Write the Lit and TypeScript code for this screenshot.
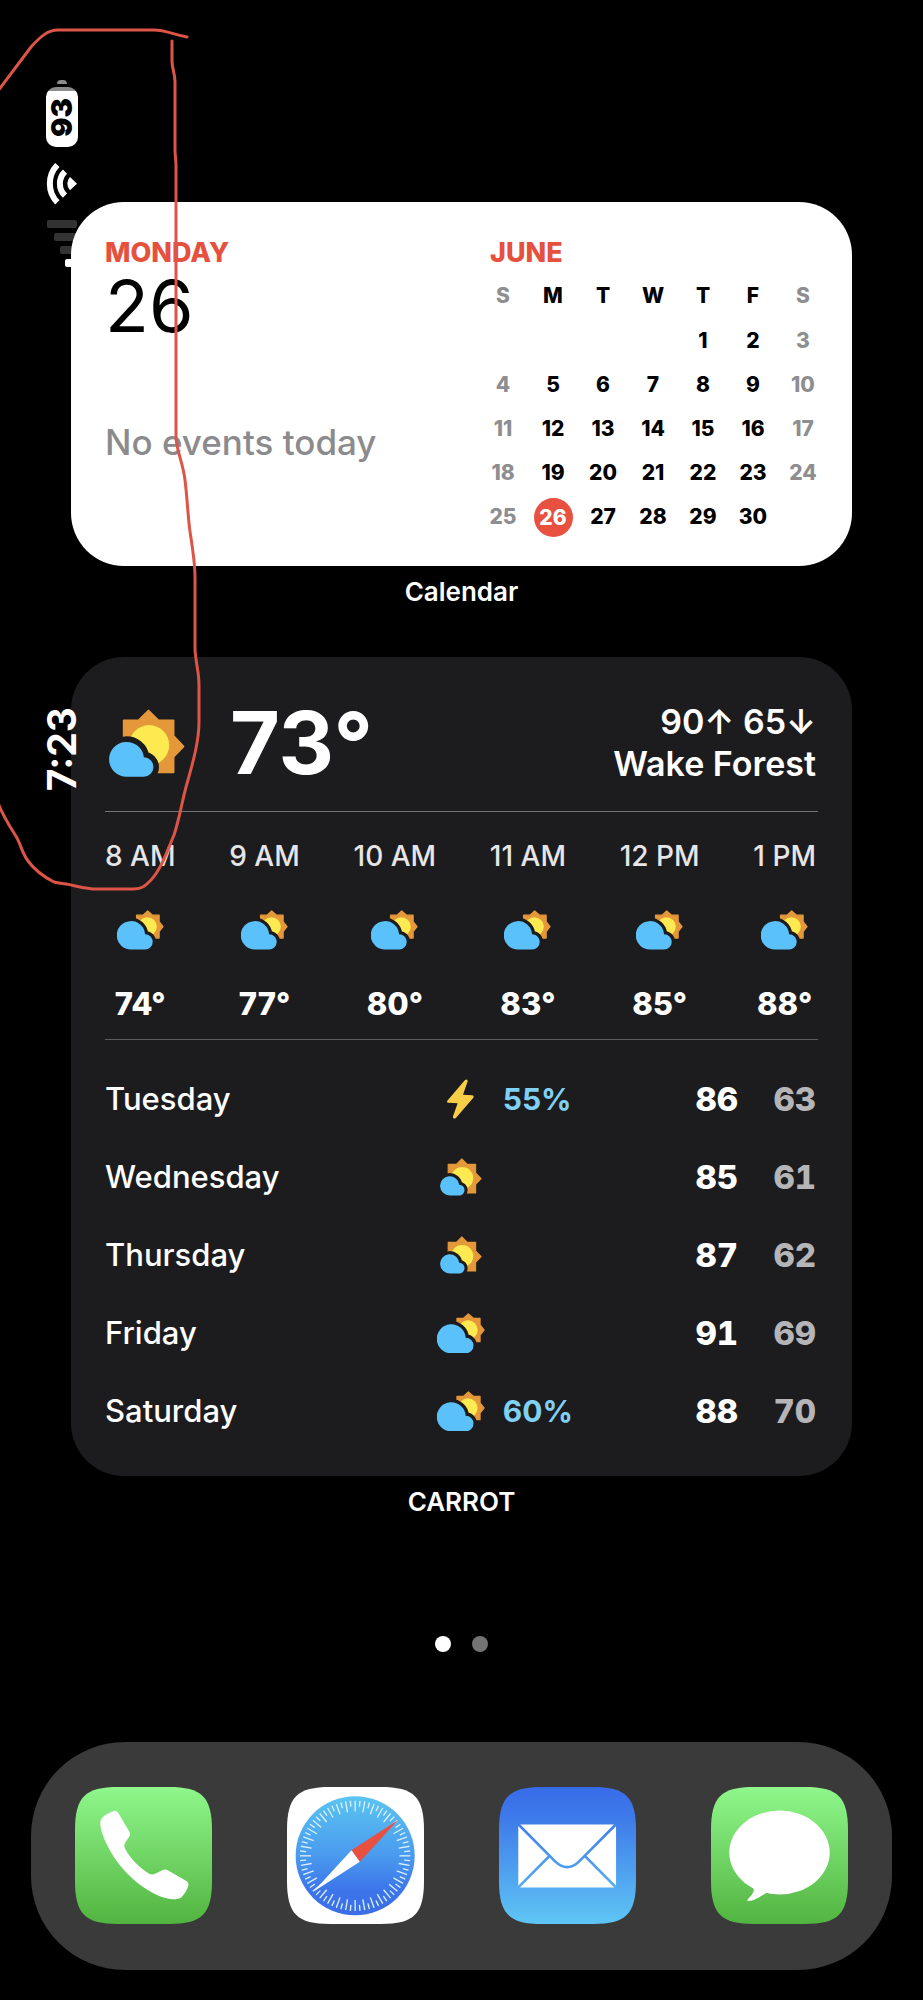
import { LitElement, html, svg, css } from "lit";
import { customElement, property } from "lit/decorators.js";
import { classMap } from "lit/directives/class-map.js";

type Sky = "mostly-sunny" | "partly-cloudy" | "storm";

interface Hour {
  label: string;
  sky: Sky;
  temp: number;
}

interface Day {
  name: string;
  sky: Sky;
  rain?: number;
  high: number;
  low: number;
}

const WEEKDAYS = ["S", "M", "T", "W", "T", "F", "S"];
const TODAY = 26;
const FIRST_WEEKDAY = 4;
const DAYS_IN_MONTH = 30;

const HOURS: Hour[] = [
  { label: "8 AM", sky: "partly-cloudy", temp: 74 },
  { label: "9 AM", sky: "partly-cloudy", temp: 77 },
  { label: "10 AM", sky: "partly-cloudy", temp: 80 },
  { label: "11 AM", sky: "partly-cloudy", temp: 83 },
  { label: "12 PM", sky: "partly-cloudy", temp: 85 },
  { label: "1 PM", sky: "partly-cloudy", temp: 88 },
];

const DAYS: Day[] = [
  { name: "Tuesday", sky: "storm", rain: 55, high: 86, low: 63 },
  { name: "Wednesday", sky: "mostly-sunny", high: 85, low: 61 },
  { name: "Thursday", sky: "mostly-sunny", high: 87, low: 62 },
  { name: "Friday", sky: "partly-cloudy", high: 91, low: 69 },
  { name: "Saturday", sky: "partly-cloudy", rain: 60, high: 88, low: 70 },
];

@customElement("sky-icon")
export class SkyIcon extends LitElement {
  @property() sky: Sky = "mostly-sunny";

  static styles = css`
    :host { display: block; }
    svg { display: block; width: 100%; height: auto; }
    .ray { fill: #e5983a; stroke: #e5983a; stroke-linejoin: round; }
    .disc { fill: #fcea50; }
    .cloud { fill: #5ac1fa; }
    .gap { fill: #1c1c1e; stroke: #1c1c1e; stroke-linejoin: round; }
    .bolt { fill: #f8ce46; }
  `;

  render() {
    if (this.sky === "storm") {
      return html`<svg viewBox="142 115 81 120" aria-hidden="true">
        <path class="bolt" d="M196 118L143 180q-3 5 3 6.500L174 188L160 227q-1 9 8 6L221 171q3-6-3-7L190 162L204 122q0-9-8-4z"></path>
      </svg>`;
    }
    if (this.sky === "partly-cloudy") {
      const cloud = "M211 240A43.500 43.500 0 1 1 253 193A23.500 23.500 0 0 1 253 240Z";
      return html`<svg viewBox="167 119 144 122" aria-hidden="true">
        <path class="ray" stroke-width="4" d="M227 135H247L261 122L276 135H296V155L308 170L296 185V205H227Z"></path>
        <circle class="disc" cx="260" cy="170" r="29"></circle>
        <path class="gap" stroke-width="20" d=${cloud}></path>
        <path class="cloud" d=${cloud}></path>
      </svg>`;
    }
    const cloud = "M381 411A53 53 0 1 1 433 352A29.500 29.500 0 0 1 432 411Z";
    return html`<svg viewBox="327 205 231 208" aria-hidden="true">
      <path class="ray" stroke-width="6" d="M372 240H417L447 210L477 240H523V287L553 319L523 350V397H372Z"></path>
      <circle class="disc" cx="449" cy="315" r="61"></circle>
      <path class="gap" stroke-width="34" d=${cloud}></path>
      <path class="cloud" d=${cloud}></path>
    </svg>`;
  }
}

@customElement("calendar-widget")
export class CalendarWidget extends LitElement {
  static styles = css`
    :host { display: block; }
    .card {
      display: flex;
      justify-content: space-between;
      padding: 34px 24px 27px 34px;
      border-radius: 53px;
      background: #fff;
      color: #000;
    }
    .weekday, .month {
      margin: 0;
      font-size: 27px;
      line-height: 34px;
      font-weight: 800;
      color: #e5503f;
    }
    .date { margin: 0; font-size: 72px; line-height: 72px; font-weight: 400; }
    .events { margin: 80px 0 0; font-size: 35px; line-height: 40px; font-weight: 500; color: #8b8b8e; }
    .month { padding: 0 0 3px 12px; text-align: left; }
    table { border-collapse: collapse; table-layout: fixed; width: 350px; }
    th, td { height: 44px; padding: 0; text-align: center; font-size: 21px; line-height: 28px; font-weight: 800; }
    th { height: 46px; }
    .weekend { color: #8e8e91; }
    .today {
      display: inline-block;
      width: 39px;
      line-height: 39px;
      border-radius: 50%;
      background: #e8503f;
      color: #fff;
    }
  `;

  private weeks(): (number | null)[][] {
    return Array.from({ length: 5 }, (_, w) =>
      WEEKDAYS.map((_d, d) => {
        const n = w * 7 + d - FIRST_WEEKDAY + 1;
        return n >= 1 && n <= DAYS_IN_MONTH ? n : null;
      })
    );
  }

  render() {
    const weekend = (d: number) => classMap({ weekend: d === 0 || d === 6 });
    return html`<section class="card">
      <div>
        <h2 class="weekday">MONDAY</h2>
        <p class="date">${TODAY}</p>
        <p class="events">No events today</p>
      </div>
      <table>
        <caption class="month">JUNE</caption>
        <thead>
          <tr>${WEEKDAYS.map((n, d) => html`<th scope="col" class=${weekend(d)}>${n}</th>`)}</tr>
        </thead>
        <tbody>
          ${this.weeks().map(
            (week) => html`<tr>
              ${week.map((n, d) => html`<td class=${weekend(d)}>${n === TODAY ? html`<span class="today">${n}</span>` : n}</td>`)}
            </tr>`
          )}
        </tbody>
      </table>
    </section>`;
  }
}

@customElement("weather-widget")
export class WeatherWidget extends LitElement {
  static styles = css`
    :host { display: block; }
    .card { padding: 0 34px 26px; border-radius: 53px; background: #1c1c1e; color: #fff; }
    .now {
      display: flex;
      align-items: center;
      gap: 45px;
      height: 154px;
      box-sizing: border-box;
      padding: 18px 2px 0 4px;
    }
    .now-icon { width: 76px; }
    .temp { margin: 0; font-size: 86px; line-height: 86px; font-weight: 700; }
    .place { margin: 0 0 0 auto; text-align: right; font-size: 34px; line-height: 42px; font-weight: 600; }
    .place span { display: block; }
    .hours {
      display: flex;
      justify-content: space-between;
      margin: 0;
      padding: 27px 2px 18px 0;
      list-style: none;
      border-top: 1px solid #737375;
      border-bottom: 1px solid #5c5c5e;
    }
    .hour { display: flex; flex-direction: column; align-items: center; gap: 37px; }
    .hour-label { font-size: 28px; line-height: 34px; font-weight: 500; color: #e6e6e8; }
    .hour-icon { width: 47px; height: 40px; }
    .hour-temp { font-size: 31px; line-height: 34px; font-weight: 800; }
    table { width: 100%; margin-top: 20px; border-collapse: collapse; table-layout: fixed; }
    th, td { height: 78px; padding: 0; line-height: 42px; }
    .c-name { width: 44%; }
    .c-icon { width: 84px; }
    .c-temp { width: 78px; }
    .name { text-align: left; font-size: 31px; font-weight: 500; }
    .day-icon { margin: 0 auto; width: 42px; }
    .day-icon.partly-cloudy { width: 48px; }
    .day-icon.storm { width: 27px; }
    .rain { font-size: 30px; font-weight: 700; color: #80d0f3; }
    .high, .low { padding-right: 2px; text-align: right; font-size: 33px; font-weight: 800; font-variant-numeric: tabular-nums; }
    .low { color: #b5b5b8; }
  `;

  render() {
    return html`<section class="card">
      <header class="now">
        <sky-icon class="now-icon" sky="mostly-sunny"></sky-icon>
        <p class="temp">73°</p>
        <p class="place"><span>90↑ 65↓</span><span>Wake Forest</span></p>
      </header>
      <ol class="hours">
        ${HOURS.map(
          (h) => html`<li class="hour">
            <span class="hour-label">${h.label}</span>
            <sky-icon class="hour-icon" sky=${h.sky}></sky-icon>
            <span class="hour-temp">${h.temp}°</span>
          </li>`
        )}
      </ol>
      <table aria-label="Daily forecast">
        <colgroup>
          <col class="c-name" /><col class="c-icon" /><col /><col class="c-temp" /><col class="c-temp" />
        </colgroup>
        <tbody>
          ${DAYS.map(
            (d) => html`<tr>
              <th scope="row" class="name">${d.name}</th>
              <td><sky-icon class="day-icon ${d.sky}" sky=${d.sky}></sky-icon></td>
              <td class="rain">${d.rain ? `${d.rain}%` : ""}</td>
              <td class="high">${d.high}</td>
              <td class="low">${d.low}</td>
            </tr>`
          )}
        </tbody>
      </table>
    </section>`;
  }
}

const TILE = "M0 130C0 30 30 0 130 0H282C382 0 412 30 412 130V282C412 382 382 412 282 412H130C30 412 0 382 0 282Z";

@customElement("app-dock")
export class AppDock extends LitElement {
  static styles = css`
    :host { display: block; }
    .dock {
      display: flex;
      justify-content: space-between;
      padding: 45px 44px 46px;
      border-radius: 94px;
      background: #3a3a3a;
    }
    .app { display: block; width: 137px; height: 137px; }
    svg { display: block; width: 100%; height: 100%; }
  `;

  private phone() {
    return svg`
      <linearGradient id="p" x1="0" y1="0" x2="0" y2="1"><stop offset="0" stop-color="#8ff78b"></stop><stop offset="1" stop-color="#52b440"></stop></linearGradient>
      <path d=${TILE} fill="url(#p)"></path>
      <path transform="translate(-225 -202)" fill="#fff" d="M342 274q7-3 12 4L389 337q4 6 0 12L375 371q-4 8 0 16C393 419 420 446 447 462q8 5 17 2L488 452q8-4 16 0L560 485q8 5 6 14C562 514 552 527 544 534C532 543 500 541 470 526C400 492 345 430 316 365C303 335 299 315 302 303C307 289 325 280 342 274Z"></path>`;
  }

  private safari() {
    const ticks = Array.from({ length: 72 }, (_, i) => {
      return svg`<line x1="205" x2="205" y1="41" y2=${i % 2 ? 59 : 74} transform="rotate(${i * 5} 205 207)"></line>`;
    });
    return svg`
      <linearGradient id="s" x1="0" y1="0" x2="0" y2="1"><stop offset="0" stop-color="#5bc4f1"></stop><stop offset="0.5" stop-color="#4a9aee"></stop><stop offset="0.8" stop-color="#3c74ea"></stop><stop offset="1" stop-color="#3c6ee6"></stop></linearGradient>
      <path d=${TILE} fill="#fff"></path>
      <circle cx="205" cy="207" r="179" fill="url(#s)"></circle>
      <g stroke="#d8f2fb" stroke-width="4">${ticks}</g>
      <path d="M334 99L194 190L219 225Z" fill="#e8503f"></path>
      <path d="M79 315L194 190L219 225Z" fill="#fff"></path>`;
  }

  private mail() {
    return svg`
      <linearGradient id="m" gradientUnits="userSpaceOnUse" x1="0" y1="0" x2="0" y2="412"><stop offset="0" stop-color="#376ce8"></stop><stop offset="0.25" stop-color="#3f7dea"></stop><stop offset="1" stop-color="#5fc6f5"></stop></linearGradient>
      <path d=${TILE} fill="url(#m)"></path>
      <rect x="58" y="113" width="294" height="189" rx="8" fill="#fff"></rect>
      <g fill="none" stroke="url(#m)" stroke-width="8">
        <path d="M58 112L168 223Q205 259 242 223L352 112"></path>
        <path d="M58 302L152 207M352 302L258 207"></path>
      </g>`;
  }

  private messages() {
    return svg`
      <linearGradient id="g" x1="0" y1="0" x2="0" y2="1"><stop offset="0" stop-color="#8ff78b"></stop><stop offset="1" stop-color="#52b440"></stop></linearGradient>
      <path d=${TILE} fill="url(#g)"></path>
      <ellipse cx="206" cy="197" rx="151" ry="126" fill="#fff"></ellipse>
      <path fill="#fff" d="M112 290q18 14 17 22q-4 13-19 26q-3 5 3 5C134 341 148 329 167 318L180 300Z"></path>`;
  }

  render() {
    const apps = [
      { name: "Phone", art: this.phone() },
      { name: "Safari", art: this.safari() },
      { name: "Mail", art: this.mail() },
      { name: "Messages", art: this.messages() },
    ];
    return html`<nav class="dock" aria-label="Dock">
      ${apps.map((a) => html`<a class="app" href="#" aria-label=${a.name}><svg viewBox="0 0 412 412">${a.art}</svg></a>`)}
    </nav>`;
  }
}

@customElement("side-status")
export class SideStatus extends LitElement {
  static styles = css`
    :host { display: flex; flex-direction: column; align-items: center; width: 32px; color: #fff; }
    .battery {
      display: flex;
      align-items: center;
      justify-content: center;
      width: 32px;
      height: 60px;
      border-radius: 10px;
      background: linear-gradient(#8c8c8c 4px, #fff 4px);
      color: #000;
    }
    .cap { width: 10px; height: 4px; margin-bottom: 3px; border-radius: 5px 5px 0 0; background: #8c8c8c; }
    .turned { writing-mode: vertical-rl; transform: rotate(180deg); white-space: nowrap; }
    .level { font-size: 29px; line-height: 32px; font-weight: 900; }
    .wifi { display: block; width: 32px; height: 42px; margin-top: 16px; }
    .signal { display: block; width: 32px; height: 48px; margin-top: 15px; }
    .time { margin-top: 439px; font-size: 39px; line-height: 32px; font-weight: 700; }
  `;

  render() {
    return html`
      <span class="cap"></span>
      <span class="battery"><span class="level turned">93</span></span>
      <svg class="wifi" viewBox="0 0 96 126" aria-hidden="true">
        <path fill="#fff" d="M93 62L72 82A29 29 0 0 1 72 42Z"></path>
        <g fill="none" stroke="#fff" stroke-width="18">
          <path d="M57 26A50 50 0 0 0 57 98"></path>
          <path d="M34 6A81 81 0 0 0 34 118"></path>
        </g>
      </svg>
      <svg class="signal" viewBox="0 0 32 48" aria-hidden="true">
        <g fill="#333">
          <rect x="1" y="0" width="30" height="8" rx="2"></rect>
          <rect x="8" y="13" width="23" height="8" rx="2"></rect>
          <rect x="14" y="26" width="17" height="8" rx="2"></rect>
        </g>
        <rect x="19" y="39" width="12" height="8" rx="2" fill="#fff"></rect>
      </svg>
      <span class="time turned">7:23</span>
    `;
  }
}

@customElement("app-root")
export class AppRoot extends LitElement {
  static styles = css`
    :host {
      display: block;
      position: relative;
      min-height: 100vh;
      box-sizing: border-box;
      padding: 202px 31px 30px;
      overflow: hidden;
      background: #000;
      color: #fff;
      font-family: Inter, "Liberation Sans", sans-serif;
    }
    .widgets { display: flex; flex-direction: column; padding: 0 40px; }
    .calendar { position: relative; z-index: 2; }
    .label { margin: 11px 0 50px; text-align: center; font-size: 26px; line-height: 30px; font-weight: 600; }
    .status { position: absolute; z-index: 1; left: 46px; top: 80px; }
    .marker { position: absolute; z-index: 3; left: 0; top: 0; width: 220px; height: 900px; pointer-events: none; }
    .marker path { fill: none; stroke: #dc5547; stroke-width: 3; stroke-linecap: round; stroke-linejoin: round; }
    .pages { display: flex; justify-content: center; gap: 21px; padding: 69px 0 90px; }
    .page { width: 16px; height: 16px; padding: 0; border: 0; border-radius: 50%; background: #737373; }
    .page.current { background: #fff; }
  `;

  render() {
    return html`
      <main class="widgets">
        <calendar-widget class="calendar"></calendar-widget>
        <p class="label">Calendar</p>
        <weather-widget></weather-widget>
        <p class="label">CARROT</p>
      </main>
      <div class="pages">
        <button class="page current" aria-label="Page 1"></button>
        <button class="page" aria-label="Page 2"></button>
      </div>
      <app-dock></app-dock>
      <side-status class="status"></side-status>
      <svg class="marker" viewBox="0 0 220 900" aria-hidden="true">
        <path d="M-2 91L31 47C41 36 48 30 58 30H154C165 30 172 34 187 37"></path>
        <path d="M172 41V61C172 69 175 73 175 82V150C175 156 176 158 176 166V438C177 452 183 463 185 480C188 505 188 522 191 538C193 553 195 562 195 578V650C196 664 199 672 199 685V722C199 741 193 762 188 780C182 800 180 817 174 835C167 852 161 869 151 880C145 886 142 889 134 889H93C78 888 74 885 66 884Q58 883 54 882C42 876 34 869 28 861C22 853 21 845 17 838C11 828 4 818 -2 803"></path>
      </svg>
    `;
  }
}
